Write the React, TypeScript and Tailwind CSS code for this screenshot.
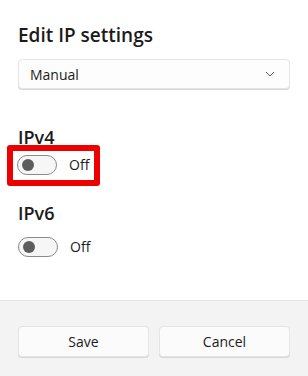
export default function App() {
  return (
    <div className="flex h-[376px] w-[308px] flex-col bg-white font-['Segoe_UI','Open_Sans',sans-serif] text-[#1b1b1b]">
      <div className="flex-1 px-[18px]">
        <h1 className="mt-[22px] text-[19px] font-semibold leading-[26px]">Edit IP settings</h1>
        <button className="mt-[11px] flex h-[30px] w-full items-center justify-between rounded-[4px] border border-[#e5e5e5] bg-[#fdfdfd] pl-[11px] pr-[14px] text-[14px] shadow-[0_1px_0_#d6d6d6]">
          <span>Manual</span>
          <svg width="10" height="6" viewBox="0 0 10 6" fill="none">
            <path d="M1 1l4 4 4-4" stroke="#5c5c5c" strokeWidth="1" />
          </svg>
        </button>

        <h2 className="mt-[36px] text-[18px] font-semibold leading-[24px]">IPv4</h2>
        <div className="-ml-[11px] -mt-[4px] inline-flex items-start gap-[12px] rounded-[3px] border-[6px] border-[#ee0000] pb-[5px] pl-[4px] pr-[5px] pt-[4px]">
          <Toggle />
          <span className="text-[14px] leading-[20px]">Off</span>
        </div>

        <h2 className="mt-[15px] text-[18px] font-semibold leading-[24px]">IPv6</h2>
        <div className="mt-[11px] flex items-center gap-[12px]">
          <Toggle />
          <span className="text-[14px]">Off</span>
        </div>
      </div>

      <div className="flex h-[76px] gap-[10px] border-t border-[#e5e5e5] bg-[#f3f3f3] px-[18px] pt-[25px]">
        <button className="h-[31px] flex-1 rounded-[4px] border border-[#e5e5e5] bg-[#fbfbfb] text-[14px] shadow-[0_1px_0_#d6d6d6]">Save</button>
        <button className="h-[31px] flex-1 rounded-[4px] border border-[#e5e5e5] bg-[#fbfbfb] text-[14px] shadow-[0_1px_0_#d6d6d6]">Cancel</button>
      </div>
    </div>
  );
}

function Toggle() {
  return (
    <div className="flex h-[20px] w-[40px] items-center rounded-full border border-[#8a8a8a] bg-[#f6f6f6] pl-[4px]">
      <div className="h-[12px] w-[12px] rounded-full bg-[#5d5d5d]" />
    </div>
  );
}
